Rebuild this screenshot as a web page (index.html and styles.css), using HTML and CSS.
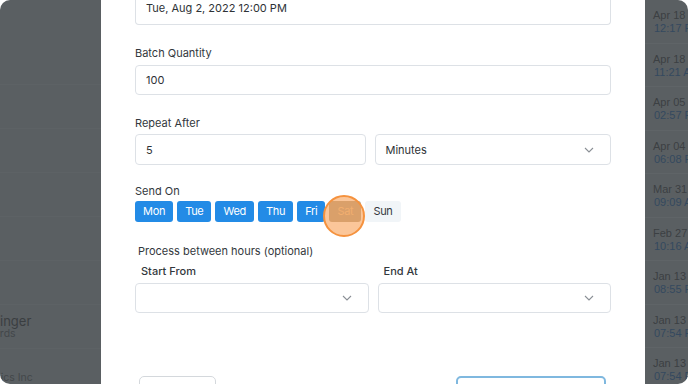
FILE: index.html
```html
<!DOCTYPE html>
<html lang="en">
<head>
  <meta charset="UTF-8">
  <meta name="viewport" content="width=device-width, initial-scale=1.0">
  <title>Schedule Batch</title>
  <link rel="stylesheet" href="styles.css">
</head>
<body>
  <div class="window">

    <!-- Page behind the modal, left side -->
    <aside class="side-left">
      <div class="left-row"></div>
      <div class="left-row"></div>
      <div class="left-row"></div>
      <div class="left-row"></div>
      <div class="left-row"></div>
      <div class="left-row"></div>
      <div class="left-row">
        <span class="left-name">Sam Singer</span>
        <span class="left-sub">Gift Cards</span>
      </div>
      <div class="left-row">
        <span class="left-sub">Acme Logistics Inc</span>
      </div>
    </aside>

    <!-- Modal form -->
    <main class="modal">
      <div class="input cut">Tue, Aug 2, 2022 12:00 PM</div>

      <label class="label lbl-batch">Batch Quantity</label>
      <div class="input">100</div>

      <label class="label lbl-repeat">Repeat After</label>
      <div class="row">
        <div class="input">5</div>
        <div class="input select">Minutes
          <svg class="chev" width="10" height="6" viewBox="0 0 10 6"><path d="M1 1l4 4 4-4" fill="none" stroke="#8a8f95" stroke-width="1.1"/></svg>
        </div>
      </div>

      <label class="label lbl-send">Send On</label>
      <div class="days">
        <span class="day on">Mon</span>
        <span class="day on">Tue</span>
        <span class="day on">Wed</span>
        <span class="day on">Thu</span>
        <span class="day on">Fri</span>
        <span class="day sat">Sat<i class="click"></i></span>
        <span class="day off">Sun</span>
      </div>

      <label class="label lbl-process">Process between hours (optional)</label>
      <div class="row">
        <div class="col">
          <label class="label sub">Start From</label>
          <div class="input select">
            <svg class="chev" width="10" height="6" viewBox="0 0 10 6"><path d="M1 1l4 4 4-4" fill="none" stroke="#8a8f95" stroke-width="1.1"/></svg>
          </div>
        </div>
        <div class="col">
          <label class="label sub">End At</label>
          <div class="input select">
            <svg class="chev" width="10" height="6" viewBox="0 0 10 6"><path d="M1 1l4 4 4-4" fill="none" stroke="#8a8f95" stroke-width="1.1"/></svg>
          </div>
        </div>
      </div>

      <div class="actions">
        <button class="btn cancel"></button>
        <button class="btn save"></button>
      </div>
    </main>

    <!-- Page behind the modal, right side -->
    <aside class="side-right">
      <div class="date-row"><span>Apr 18 2022</span><span class="time">12:17 PM</span></div>
      <div class="date-row"><span>Apr 18 2022</span><span class="time">11:21 AM</span></div>
      <div class="date-row"><span>Apr 05 2022</span><span class="time">02:57 PM</span></div>
      <div class="date-row"><span>Apr 04 2022</span><span class="time">06:08 PM</span></div>
      <div class="date-row"><span>Mar 31 2022</span><span class="time">09:09 AM</span></div>
      <div class="date-row"><span>Feb 27 2022</span><span class="time">10:16 AM</span></div>
      <div class="date-row"><span>Jan 13 2022</span><span class="time">08:55 PM</span></div>
      <div class="date-row"><span>Jan 13 2022</span><span class="time">07:54 PM</span></div>
      <div class="date-row"><span>Jan 13 2022</span><span class="time">07:54 PM</span></div>
    </aside>

  </div>
</body>
</html>
```

FILE: styles.css
```css
body {
  margin: 0;
  background: #fff;
  font-family: Inter, "Liberation Sans", Arial, sans-serif;
  font-size: 11px;
  color: #33383d;
}

.window {
  width: 688px;
  height: 384px;
  border-radius: 10px;
  overflow: hidden;
  background: #5a5f62;
  display: grid;
  grid-template-columns: 101px 544px 43px;
}

/* background page bits */
.side-left {
  overflow: hidden;
  display: flex;
  flex-direction: column;
}

.left-row {
  flex-shrink: 0;
  height: 43px;
  border-bottom: 1px solid #5d6265;
  display: flex;
  flex-direction: column;
  justify-content: center;
  white-space: nowrap;
}

.left-row:first-child {
  height: 84px;
}

.left-name {
  margin-left: -39px;
  font-size: 13px;
  line-height: 14px;
  color: #3a3e41;
}

.left-sub {
  margin-left: -34px;
  font-size: 10.5px;
  line-height: 12px;
  color: #43474a;
}

.left-row:last-child .left-sub {
  margin-left: -61px;
  margin-top: 14px;
}

.side-right {
  overflow: hidden;
  white-space: nowrap;
}

.date-row {
  height: 43.5px;
  border-bottom: 1px solid #5f6467;
  padding: 9px 0 0 8px;
  box-sizing: border-box;
  display: flex;
  flex-direction: column;
  color: #3c4043;
  font-family: "Liberation Sans", Arial, sans-serif;
  font-size: 11px;
  line-height: 13px;
}

.date-row .time {
  color: #34495f;
  margin-left: 1px;
}

/* modal */
.modal {
  background: #fff;
  padding: 0 34px;
  display: flex;
  flex-direction: column;
  overflow: hidden;
}

.modal > * {
  flex-shrink: 0;
}

.label {
  display: block;
  line-height: 16px;
  color: #33383d;
}

.lbl-batch { margin: 20px 0 4px; }
.lbl-repeat { margin: 20px 0 3px; }
.lbl-send { margin: 18px 0 2px; }
.lbl-process { margin: 21px 0 4px 3px; }
.label.sub { margin: 0 0 4px 6px; font-weight: 500; }

.input {
  height: 30px;
  box-sizing: border-box;
  border: 1px solid #dde1e6;
  border-radius: 4px;
  padding: 0 10px;
  display: flex;
  align-items: center;
  color: #2e3236;
}

.input.cut {
  height: 25px;
  border-top: none;
  border-radius: 0 0 4px 4px;
  align-items: flex-start;
  line-height: 16px;
}

.row {
  display: flex;
  gap: 9px;
}

.row > .input,
.row > .col {
  flex: 1;
}

.row > .input {
  height: 31px;
}

.select {
  justify-content: space-between;
  padding-right: 16px;
}

.select .chev {
  margin-left: auto;
}

.days {
  display: flex;
  gap: 4px;
}

.day {
  position: relative;
  height: 21px;
  line-height: 21px;
  padding: 0 8px;
  border-radius: 3px;
  letter-spacing: -0.3px;
}

.day.on {
  background: #238be6;
  color: #fff;
}

.day.sat {
  background: #b6aa98;
  color: #eac9a0;
}

.day.off {
  background: #f1f5f8;
  color: #33383d;
}

.click {
  position: absolute;
  left: -6px;
  top: -6px;
  width: 42px;
  height: 42px;
  box-sizing: border-box;
  border-radius: 50%;
  border: 2px solid #f5923e;
  background: rgba(247, 152, 70, 0.55);
}

.actions {
  margin-top: 63px;
  display: flex;
  justify-content: space-between;
  padding: 0 5px 0 4px;
}

.btn {
  height: 30px;
  background: #fff;
  border-radius: 5px;
  flex-shrink: 0;
}

.btn.cancel {
  width: 77px;
  border: 1px solid #d4d8dc;
}

.btn.save {
  width: 150px;
  border: 2px solid #7fb8df;
}
```
